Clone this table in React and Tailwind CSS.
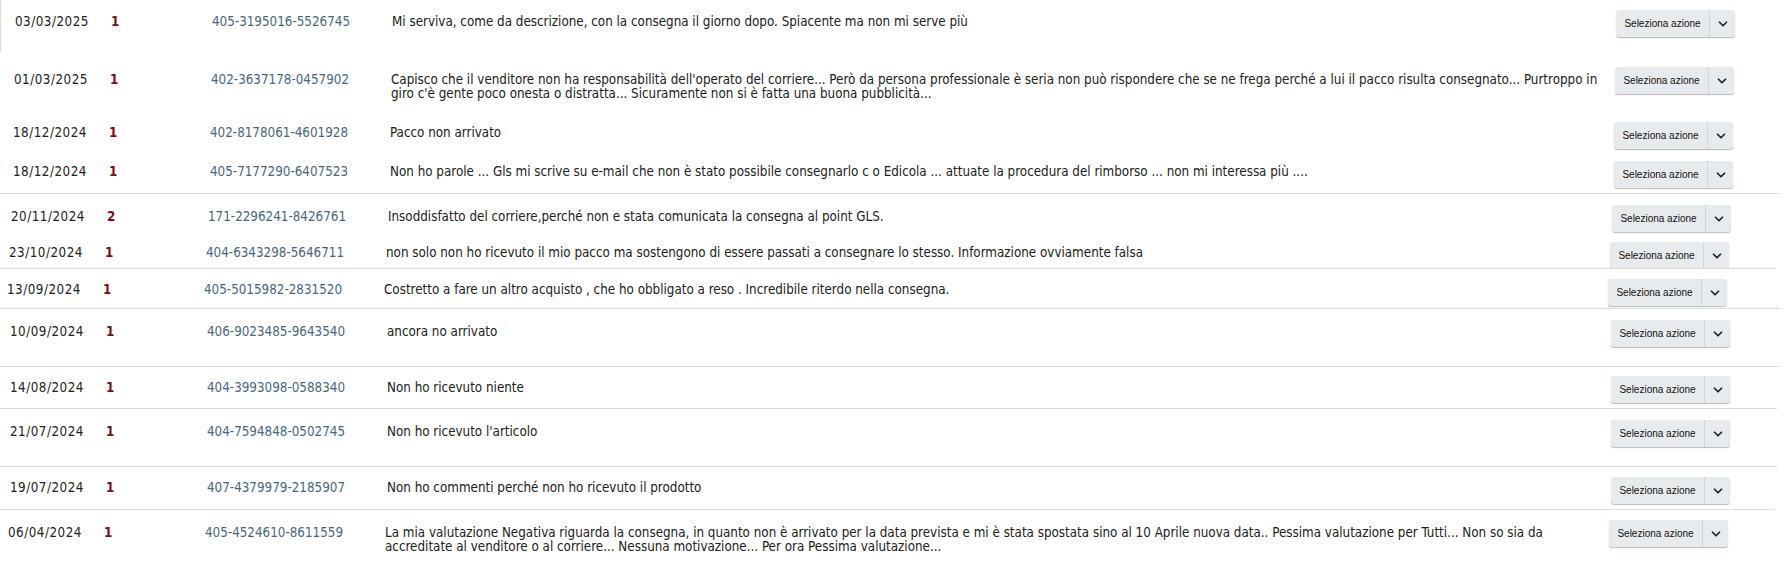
import { ChevronDown } from 'lucide-react'

// each row keeps its own horizontal shift, height and inner offsets
const ROWS = [
  {
    date: '03/03/2025',
    stars: '1',
    order: '405-3195016-5526745',
    text: 'Mi serviva, come da descrizione, con la consegna il giorno dopo. Spiacente ma non mi serve più',
    row: 'h-[52px] pl-[14px] border-l border-[#dcdcdc]',
    textTop: 'pt-[15px]',
    btnTop: 'mt-[10px]',
  },
  {
    date: '01/03/2025',
    stars: '1',
    order: '402-3637178-0457902',
    text: "Capisco che il venditore non ha responsabilità dell'operato del corriere... Però da persona professionale è seria non può rispondere che se ne frega perché a lui il pacco risulta consegnato... Purtroppo in\ngiro c'è gente poco onesta o distratta... Sicuramente non si è fatta una buona pubblicità...",
    row: 'h-[58px] pl-[14px]',
    textTop: 'pt-[21px]',
    btnTop: 'mt-[15px]',
  },
  {
    date: '18/12/2024',
    stars: '1',
    order: '402-8178061-4601928',
    text: 'Pacco non arrivato',
    row: 'h-[42px] pl-[13px]',
    textTop: 'pt-[16px]',
    btnTop: 'mt-[12px]',
  },
  {
    date: '18/12/2024',
    stars: '1',
    order: '405-7177290-6407523',
    text: 'Non ho parole ... Gls mi scrive su e-mail che non è stato possibile consegnarlo c o Edicola ... attuate la procedura del rimborso ... non mi interessa più ....',
    row: 'h-[42px] w-[1780px] pl-[13px] border-b border-[#dcdcdc]',
    textTop: 'pt-[13px]',
    btnTop: 'mt-[9px]',
  },
  {
    date: '20/11/2024',
    stars: '2',
    order: '171-2296241-8426761',
    text: 'Insoddisfatto del corriere,perché non e stata comunicata la consegna al point GLS.',
    row: 'h-[43px] pl-[11px]',
    textTop: 'pt-[16px]',
    btnTop: 'mt-[11px]',
  },
  {
    date: '23/10/2024',
    stars: '1',
    order: '404-6343298-5646711',
    text: 'non solo non ho ricevuto il mio pacco ma sostengono di essere passati a consegnare lo stesso. Informazione ovviamente falsa',
    row: 'h-[32px] w-[1776px] pl-[9px] border-b border-[#dcdcdc] overflow-hidden',
    textTop: 'pt-[9px]',
    btnTop: 'mt-[5px]',
  },
  {
    date: '13/09/2024',
    stars: '1',
    order: '405-5015982-2831520',
    text: 'Costretto a fare un altro acquisto , che ho obbligato a reso . Incredibile riterdo nella consegna.',
    row: 'h-[40px] w-[1780px] pl-[7px] border-b border-[#dcdcdc]',
    textTop: 'pt-[14px]',
    btnTop: 'mt-[10px]',
  },
  {
    date: '10/09/2024',
    stars: '1',
    order: '406-9023485-9643540',
    text: 'ancora no arrivato',
    row: 'h-[58px] w-[1780px] pl-[10px] border-b border-[#dcdcdc]',
    textTop: 'pt-[16px]',
    btnTop: 'mt-[11px]',
  },
  {
    date: '14/08/2024',
    stars: '1',
    order: '404-3993098-0588340',
    text: 'Non ho ricevuto niente',
    row: 'h-[42px] w-[1777px] pl-[10px] border-b border-[#dcdcdc]',
    textTop: 'pt-[14px]',
    btnTop: 'mt-[9px]',
  },
  {
    date: '21/07/2024',
    stars: '1',
    order: '404-7594848-0502745',
    text: "Non ho ricevuto l'articolo",
    row: 'h-[58px] w-[1777px] pl-[10px] border-b border-[#dcdcdc]',
    textTop: 'pt-[16px]',
    btnTop: 'mt-[11px]',
  },
  {
    date: '19/07/2024',
    stars: '1',
    order: '407-4379979-2185907',
    text: 'Non ho commenti perché non ho ricevuto il prodotto',
    row: 'h-[43px] w-[1774px] pl-[10px] border-b border-[#dcdcdc]',
    textTop: 'pt-[14px]',
    btnTop: 'mt-[10px]',
  },
  {
    date: '06/04/2024',
    stars: '1',
    order: '405-4524610-8611559',
    text: 'La mia valutazione Negativa riguarda la consegna, in quanto non è arrivato per la data prevista e mi è stata spostata sino al 10 Aprile nuova data.. Pessima valutazione per Tutti... Non so sia da\naccreditate al venditore o al corriere... Nessuna motivazione... Per ora Pessima valutazione...',
    row: 'h-[70px] pl-[8px]',
    textTop: 'pt-[16px]',
    btnTop: 'mt-[10px]',
  },
]

function ActionButton({ className }) {
  return (
    <div
      className={`flex h-[27px] w-[119px] shrink-0 rounded-[3px] bg-[#e8ebee] shadow-[0_1px_1px_rgba(0,0,0,0.28)] ${className}`}
    >
      <div className="flex w-[94px] items-center justify-center border-r border-[#d2d6da] font-['Liberation_Sans',Arial,sans-serif] text-[10px] tracking-normal text-[#111]">
        Seleziona azione
      </div>
      <div className="flex flex-1 items-center justify-center text-[#222]">
        <ChevronDown size={14} strokeWidth={3} />
      </div>
    </div>
  )
}

export default function App() {
  return (
    <div className="h-[580px] w-[1789px] overflow-hidden bg-white font-['DejaVu_Sans_Condensed','DejaVu_Sans',sans-serif] font-stretch-condensed text-[13.3px] leading-[14px] text-[#222]">
      {ROWS.map((r, i) => (
        <div key={i} className={`flex items-start ${r.row}`}>
          <div className={`w-[96px] shrink-0 tracking-[0.5px] text-[#222] ${r.textTop}`}>
            {r.date}
          </div>
          <div className={`w-[101px] shrink-0 font-bold text-[#7d0c1d] ${r.textTop}`}>
            {r.stars}
          </div>
          <div className={`w-[180px] shrink-0 text-[#4a677e] ${r.textTop}`}>{r.order}</div>
          <div className={`w-[1224px] shrink-0 whitespace-pre-line pr-[8px] ${r.textTop}`}>
            {r.text}
          </div>
          <ActionButton className={r.btnTop} />
        </div>
      ))}
    </div>
  )
}
